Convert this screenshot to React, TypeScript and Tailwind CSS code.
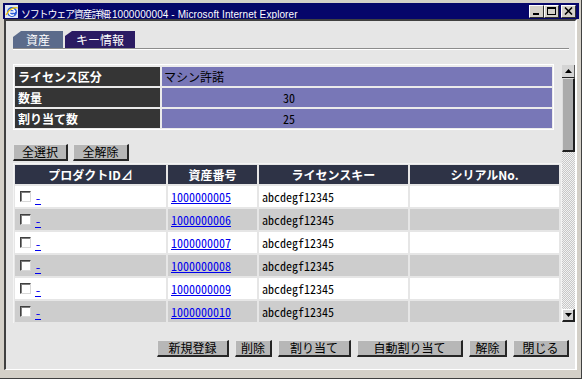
import React from 'react';

const jp = "font-['Noto_Sans_CJK_JP','Liberation_Sans',sans-serif]";
const half = "font-['Noto_Sans_CJK_JP','Liberation_Mono',monospace] [font-feature-settings:'hwid']";

function WinButton({ kind }: { kind: 'min' | 'max' | 'close' }) {
  return (
    <div className="w-[15px] h-[13px] bg-[#d4d0c8] border border-t-white border-l-white border-r-[#303030] border-b-[#303030] flex items-center justify-center">
      <svg width="9" height="8" viewBox="0 0 9 8">
        {kind === 'min' && <rect x="1" y="6" width="6" height="2" fill="#000" />}
        {kind === 'max' && (
          <>
            <rect x="0.5" y="0.5" width="8" height="7" fill="none" stroke="#000" />
            <rect x="0" y="0" width="9" height="2" fill="#000" />
          </>
        )}
        {kind === 'close' && <path d="M1 0.5 L8 7.5 M8 0.5 L1 7.5" stroke="#000" strokeWidth="1.6" />}
      </svg>
    </div>
  );
}

function Btn({ label, w }: { label: string; w: string }) {
  return (
    <div
      className={`${w} h-[17px] bg-[#b7b7b7] border-t border-l border-t-[#e8e8e8] border-l-[#e8e8e8] border-r-2 border-b-2 border-r-[#262626] border-b-[#262626] flex items-center justify-center text-[12px] leading-none text-black ${jp}`}
    >
      {label}
    </div>
  );
}

function Checkbox() {
  return (
    <div className="w-[11px] h-[11px] bg-white border border-t-[#404040] border-l-[#404040] border-r-[#d8d8d8] border-b-[#d8d8d8] shadow-[inset_1px_1px_0_#808080]" />
  );
}

export default function App() {
  const rows = [5, 6, 7, 8, 9, 10].map((n) => `10000000${String(n).padStart(2, '0')}`);

  return (
    <div className="w-[582px] h-[379px] bg-[#d4d0c8] pt-[3px] pl-[3px] pr-[2px] border-b border-r border-[#404040] flex flex-col overflow-hidden">
      {/* title bar */}
      <div className="h-[16px] bg-[#06066a] flex items-center pl-[1px] pr-[3px] shrink-0">
        <svg width="15" height="15" viewBox="0 0 15 15" className="shrink-0">
          <rect x="1" y="1" width="13" height="13" fill="#dfe6f5" />
          <circle cx="8" cy="8" r="5" fill="#2a5bd7" />
          <path d="M5 8 H11 M11 8 A3 3 0 1 0 10 10.5" stroke="#fff" strokeWidth="1.5" fill="none" />
          <path d="M2 11 Q7 2 14 4" stroke="#f2c200" strokeWidth="1.3" fill="none" />
        </svg>
        <span className={`ml-[2px] text-white leading-none whitespace-nowrap ${jp}`}>
          <span className="text-[10px] tracking-[-1.2px]">ソフトウェア資産詳細</span>
          <span className="font-['Liberation_Sans',sans-serif] text-[10px] tracking-[0.1px]">:1000000004 - Microsoft Internet Explorer</span>
        </span>
        <div className="ml-auto flex items-center">
          <WinButton kind="min" />
          <WinButton kind="max" />
          <div className="w-[2px]" />
          <WinButton kind="close" />
        </div>
      </div>

      {/* content */}
      <div className="ml-[1px] mr-[2px] h-[351px] bg-[#e6e6e6] border-t-2 border-l-2 border-t-[#404040] border-l-[#404040] border-r-2 border-b border-r-white border-b-white flex flex-col">
        {/* tabs */}
        <div className="pl-[7px] mt-[10px] flex gap-[2px]">
          <div className={`w-[50px] h-[17px] bg-[#5b6b8b] [clip-path:polygon(0_6px,8px_0,100%_0,100%_100%,0_100%)] flex items-center justify-center text-white text-[12px] leading-none ${jp}`}>
            資産
          </div>
          <div className={`w-[70px] h-[17px] bg-[#2b1b63] [clip-path:polygon(0_5px,7px_0,100%_0,100%_100%,0_100%)] flex items-center justify-center text-white text-[12px] leading-none ${jp}`}>
            キー情報
          </div>
        </div>
        <div className="ml-[7px] w-[556px] h-[2px] border-t border-t-[#8c8c8c] border-b border-b-white" />

        {/* scroll frame */}
        <div className="mt-[14px] h-[259px] flex">
          <div className="w-[557px] pl-[7px] overflow-hidden">
            {/* info table */}
            <div className="w-[541px] border border-white bg-[#ebebeb] px-[1px] pt-[2px] pb-[1px] grid grid-cols-[145px_1fr] gap-[2px]">
              <div className={`h-[19px] bg-[#353535] text-white font-bold text-[12px] flex items-center pl-[3px] ${jp}`}>ライセンス区分</div>
              <div className={`h-[19px] bg-[#7877b7] text-black text-[12px] flex items-center pl-[2px] ${jp}`}>マシン許諾</div>
              <div className={`h-[19px] bg-[#353535] text-white font-bold text-[12px] flex items-center pl-[3px] ${jp}`}>数量</div>
              <div className={`h-[19px] bg-[#7877b7] text-black text-[12px] flex items-center pl-[121px] ${half}`}>30</div>
              <div className={`h-[19px] bg-[#353535] text-white font-bold text-[12px] flex items-center pl-[3px] ${jp}`}>割り当て数</div>
              <div className={`h-[19px] bg-[#7877b7] text-black text-[12px] flex items-center pl-[121px] ${half}`}>25</div>
            </div>

            <div className="mt-[14px] flex gap-[5px]">
              <Btn label="全選択" w="w-[55px]" />
              <Btn label="全解除" w="w-[56px]" />
            </div>

            {/* data table */}
            <div className="mt-[2px] w-[549px] border border-[#f4f4f4] bg-[#e6e6e6] p-[1px] grid grid-cols-[151px_89px_149px_149px] gap-[2px]">
              {['プロダクトID⊿', '資産番号', 'ライセンスキー', 'シリアルNo.'].map((h) => (
                <div key={h} className={`h-[19px] bg-[#2e3346] text-white font-bold text-[12px] flex items-center justify-center ${jp}`}>
                  {h}
                </div>
              ))}
              {rows.map((id, i) => {
                const bg = i % 2 === 0 ? 'bg-white' : 'bg-[#cdcdcd]';
                return (
                  <React.Fragment key={id}>
                    <div className={`h-[21px] ${bg} flex items-center pl-[5px]`}>
                      <Checkbox />
                      <a href="#" className={`ml-[4px] mt-[3px] text-[12px] text-[#0000ee] underline ${half}`}>-</a>
                    </div>
                    <div className={`h-[21px] ${bg} flex items-center pl-[3px]`}>
                      <a href="#" className={`text-[12px] text-[#0000ee] underline ${half}`}>{id}</a>
                    </div>
                    <div className={`h-[21px] ${bg} flex items-center pl-[3px] text-[12px] text-black ${half}`}>abcdegf12345</div>
                    <div className={`h-[21px] ${bg}`} />
                  </React.Fragment>
                );
              })}
              {/* next row, scrolled out of view */}
              <div className="h-[21px] bg-white" />
              <div className="h-[21px] bg-white" />
              <div className="h-[21px] bg-white" />
              <div className="h-[21px] bg-white" />
            </div>
          </div>

          {/* scrollbar */}
          <div className="w-[13px] mt-[1px] h-[257px] flex flex-col">
            <div className="h-[13px] bg-[#d4d4d4] border-b border-b-[#202020] border-r border-r-[#606060] flex items-center justify-center">
              <svg width="7" height="4" viewBox="0 0 7 4"><path d="M3.5 0 L7 4 H0 Z" fill="#000" /></svg>
            </div>
            <div className="h-[74px] bg-[#ababab] border-t border-l border-t-[#dcdcdc] border-l-[#dcdcdc] border-r-2 border-b-2 border-r-[#202020] border-b-[#202020]" />
            <div className="flex-1 bg-[repeating-conic-gradient(#c8c8c8_0%_25%,#f2f2f2_0%_50%)] bg-[length:2px_2px]" />
            <div className="h-[13px] bg-[#d4d4d4] border-t border-l border-t-white border-l-white border-r-2 border-b-2 border-r-[#202020] border-b-[#202020] flex items-center justify-center">
              <svg width="7" height="4" viewBox="0 0 7 4"><path d="M0 0 H7 L3.5 4 Z" fill="#000" /></svg>
            </div>
          </div>
        </div>

        {/* bottom buttons */}
        <div className="mt-[17px] flex justify-end pr-[6px] gap-[6px]">
          <Btn label="新規登録" w="w-[72px]" />
          <Btn label="削除" w="w-[37px]" />
          <Btn label="割り当て" w="w-[73px]" />
          <Btn label="自動割り当て" w="w-[106px]" />
          <Btn label="解除" w="w-[38px]" />
          <Btn label="閉じる" w="w-[56px]" />
        </div>
      </div>
    </div>
  );
}
